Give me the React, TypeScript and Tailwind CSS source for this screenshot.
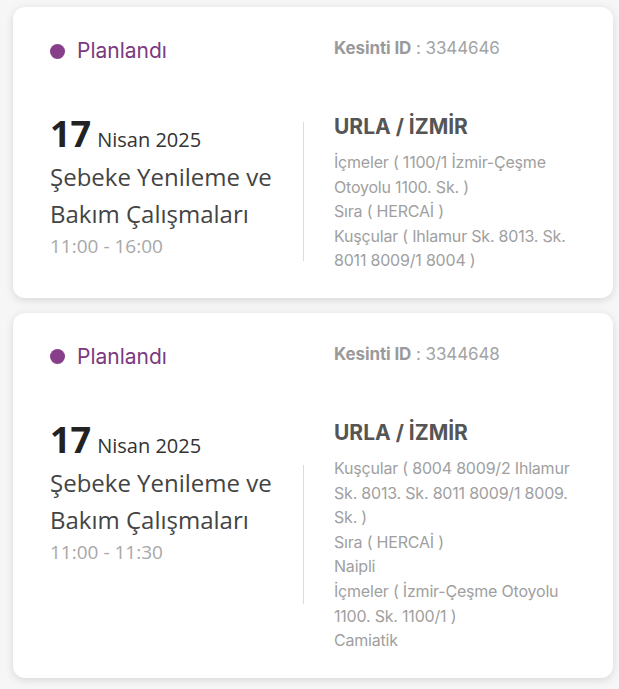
import React from "react";

type Outage = {
  id: string;
  day: string;
  monthYear: string;
  title: string;
  time: string;
  city: string;
  places: string[];
};

const outages: Outage[] = [
  {
    id: "3344646",
    day: "17",
    monthYear: "Nisan 2025",
    title: "Şebeke Yenileme ve Bakım Çalışmaları",
    time: "11:00 - 16:00",
    city: "URLA / İZMİR",
    places: [
      "İçmeler ( 1100/1 İzmir-Çeşme Otoyolu 1100. Sk. )",
      "Sıra ( HERCAİ )",
      "Kuşçular ( Ihlamur Sk. 8013. Sk. 8011 8009/1 8004 )",
    ],
  },
  {
    id: "3344648",
    day: "17",
    monthYear: "Nisan 2025",
    title: "Şebeke Yenileme ve Bakım Çalışmaları",
    time: "11:00 - 11:30",
    city: "URLA / İZMİR",
    places: [
      "Kuşçular ( 8004 8009/2 Ihlamur Sk. 8013. Sk. 8011 8009/1 8009. Sk. )",
      "Sıra ( HERCAİ )",
      "Naipli",
      "İçmeler ( İzmir-Çeşme Otoyolu 1100. Sk. 1100/1 )",
      "Camiatik",
    ],
  },
];

const geo = { fontFamily: "Inter, Lato, 'Noto Sans', sans-serif" };
const humanist = { fontFamily: "'Open Sans', 'Noto Sans', sans-serif" };

function OutageCard({ o }: { o: Outage }) {
  return (
    <div className="bg-white rounded-[12px] shadow-[0_2px_8px_rgba(0,0,0,0.13)] px-[37px] pt-[30px] pb-[25px]">
      <div className="flex items-center" style={geo}>
        <div className="w-[253px] flex items-center gap-[12px]">
          <span className="w-[15px] h-[15px] rounded-full bg-[#873f89]" />
          <span className="text-[21px] leading-[28px] text-[#7b3a7f]">Planlandı</span>
        </div>
        <div className="pl-[31px] text-[17px] leading-[28px] text-[#a3a3a3] -mt-[6px] tracking-[-0.1px]">
          <span className="font-bold text-[#9a9a9a]">Kesinti ID</span> : {o.id}
        </div>
      </div>

      <div className="flex mt-[45px]">
        <div className="w-[253px] shrink-0 pt-[4px]" style={humanist}>
          <div className="flex items-baseline gap-[6px] text-[#222]">
            <span className="text-[36px] leading-[40px] font-bold">{o.day}</span>
            <span className="text-[20px] leading-[40px] text-[#333]">{o.monthYear}</span>
          </div>
          <div className="text-[24px] leading-[37px] text-[#444] pr-[10px] -mt-[2px]">{o.title}</div>
          <div className="text-[19px] leading-[28px] text-[#a8a8a8]">{o.time}</div>
        </div>
        <div className="w-px h-[139px] bg-[#dcdcdc] self-center shrink-0" />
        <div className="pl-[30px] flex-1" style={geo}>
          <div className="text-[21px] leading-[30px] font-bold text-[#555] mt-[2px]">{o.city}</div>
          <div className="mt-[8px]">
            {o.places.map((p) => (
              <div key={p} className="text-[16px] leading-[24.6px] text-[#a0a0a0] tracking-[-0.2px]">
                {p}
              </div>
            ))}
          </div>
        </div>
      </div>
    </div>
  );
}

export default function App() {
  return (
    <div className="min-h-screen bg-[#f6f6f6] pl-[13px] pr-[6px] pt-[7px] pb-[8px] flex flex-col gap-[15px]">
      {outages.map((o) => (
        <OutageCard key={o.id} o={o} />
      ))}
    </div>
  );
}
